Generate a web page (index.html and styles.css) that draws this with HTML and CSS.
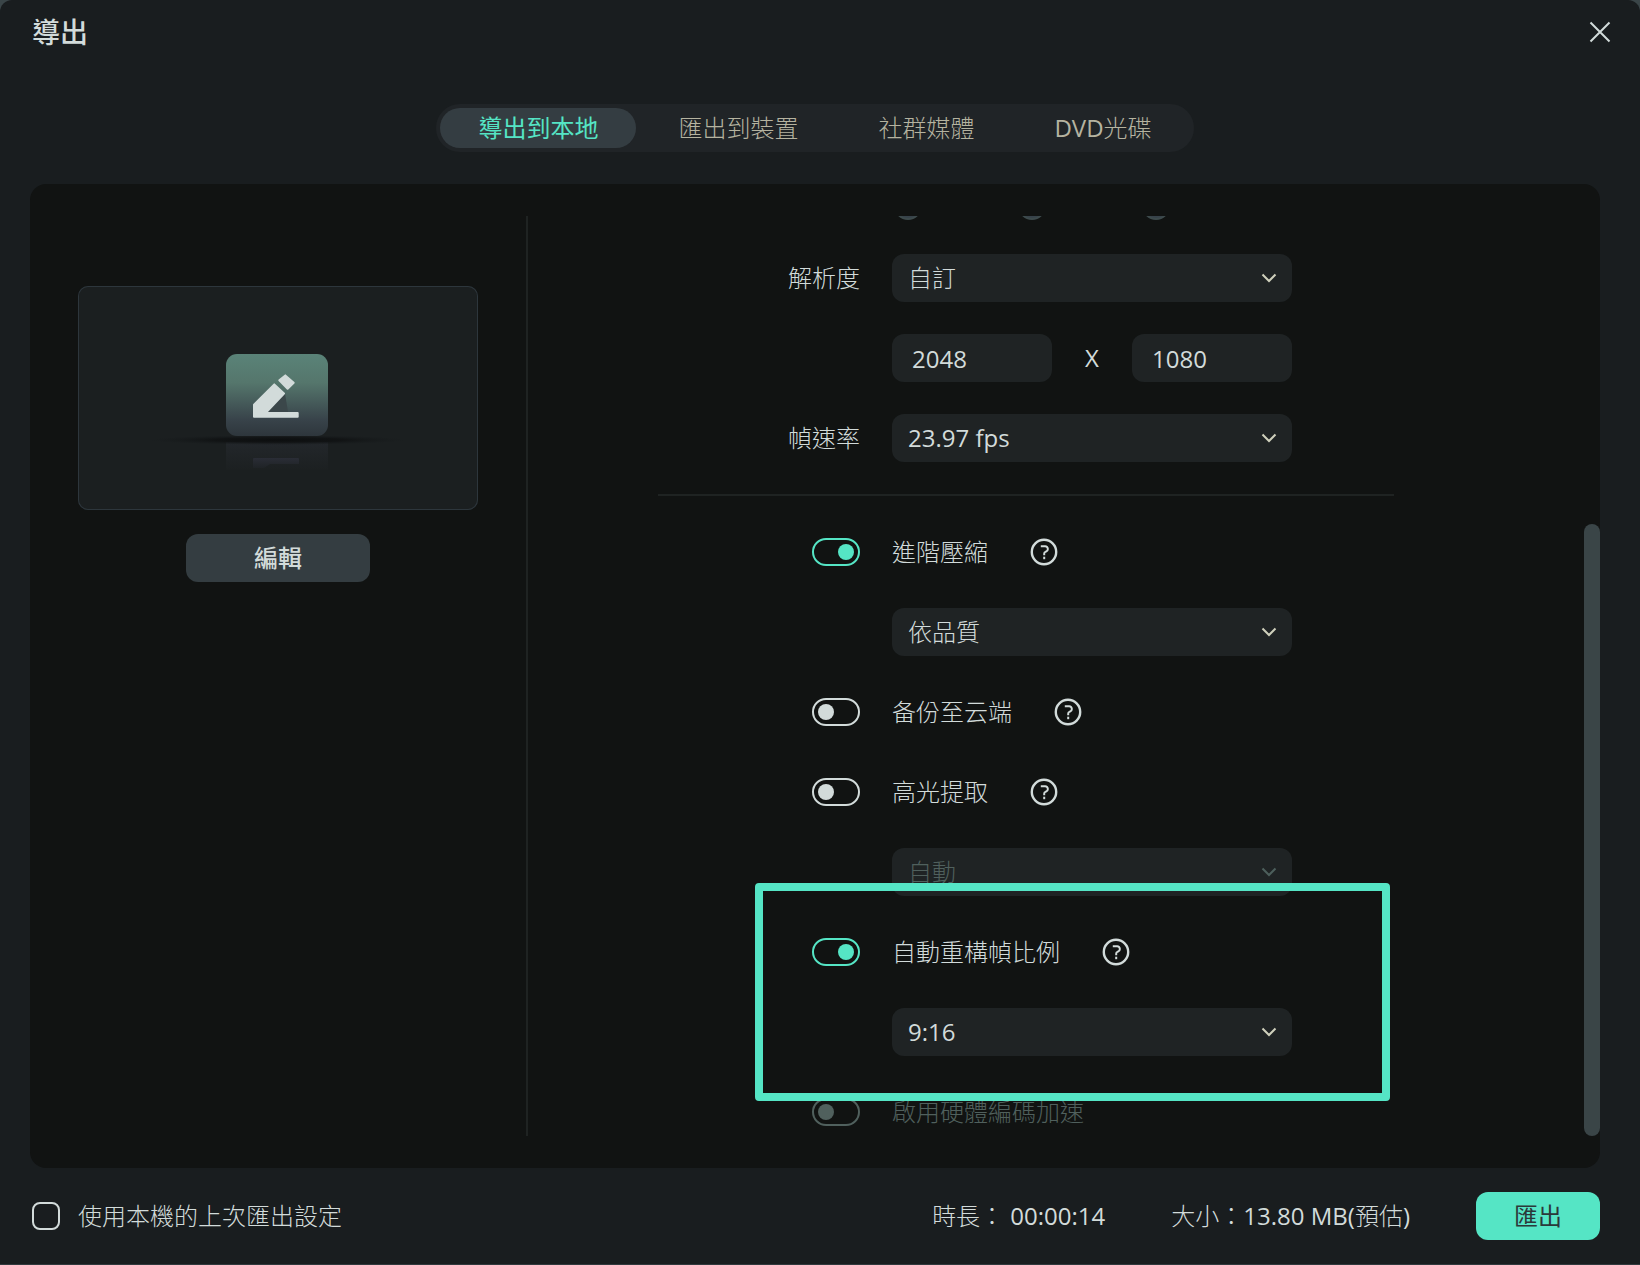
FILE: index.html
```html
<!DOCTYPE html>
<html lang="zh-Hant">
<head>
<meta charset="utf-8">
<meta name="viewport" content="width=device-width, initial-scale=1">
<title>導出</title>
<link rel="stylesheet" href="styles.css">
</head>
<body>
<svg class="symbols" aria-hidden="true">
  <symbol id="chevron" viewBox="0 0 16 10"><path d="M1.5 1.5 8 8l6.500-6.500" fill="none" stroke="currentColor" stroke-width="2"/></symbol>
  <symbol id="help" viewBox="0 0 28 28">
    <circle cx="14" cy="14" r="12.200" fill="none" stroke="currentColor" stroke-width="2.400"/>
    <path d="M10.800 8.200h4.400a2.600 2.600 0 0 1 2.600 2.600v.4a2.400 2.400 0 0 1-1.400 2.200l-1 .500a2 2 0 0 0-1.200 1.800v1.500" fill="none" stroke="currentColor" stroke-width="2"/>
    <path d="M13.200 18.700h2v2.500h-2z" fill="currentColor"/>
  </symbol>
</svg>
<div class="window">
  <header class="titlebar">
    <h1 class="title">導出</h1>
    <button class="close" type="button" aria-label="關閉">
      <svg width="22" height="22" viewBox="0 0 22 22"><path d="M1.500 1.500l19 19M20.500 1.500l-19 19" stroke="currentColor" stroke-width="2"/></svg>
    </button>
  </header>

  <main class="main">
    <nav class="tabs">
      <button class="tab tab-active" type="button">導出到本地</button>
      <button class="tab" type="button">匯出到裝置</button>
      <button class="tab" type="button">社群媒體</button>
      <button class="tab" type="button"><span class="latin">DVD</span>光碟</button>
    </nav>

    <div class="panel">
      <section class="preview">
        <div class="thumb">
          <svg viewBox="0 0 400 224" aria-hidden="true">
            <defs>
              <linearGradient id="tile" x1="0" y1="0" x2="0" y2="1">
                <stop offset="0" stop-color="#5a8378"/>
                <stop offset=".35" stop-color="#55766c"/>
                <stop offset=".8" stop-color="#38434a"/>
                <stop offset="1" stop-color="#2e363c"/>
              </linearGradient>
              <linearGradient id="mirror" x1="0" y1="0" x2="0" y2="1">
                <stop offset="0" stop-color="#23272b"/>
                <stop offset="1" stop-color="#1c2021"/>
              </linearGradient>
              <linearGradient id="mirror-pen" x1="0" y1="0" x2="0" y2="1">
                <stop offset="0" stop-color="#2a2d36"/>
                <stop offset="1" stop-color="#1f2326"/>
              </linearGradient>
              <radialGradient id="shade">
                <stop offset="0" stop-color="#0c0e0f"/>
                <stop offset=".5" stop-color="#0f1112" stop-opacity=".8"/>
                <stop offset="1" stop-color="#15191b" stop-opacity="0"/>
              </radialGradient>
            </defs>
            <rect x="148" y="156" width="102" height="28" fill="url(#mirror)"/>
            <path d="M176 172h44a1 1 0 0 1 1 1v5h-29l-6 4h-11v-9a1 1 0 0 1 1-1z" fill="url(#mirror-pen)"/>
            <ellipse cx="200" cy="154" rx="128" ry="5" fill="url(#shade)"/>
            <rect x="148" y="68" width="102" height="82" rx="11" fill="url(#tile)"/>
            <path d="M190 126l17-18.500 3 18.500z" fill="#3b474a"/>
            <g fill="#d2dbda" stroke="#d2dbda" stroke-width="2" stroke-linejoin="round">
              <path d="M196.300 98.400 206 107.500 187.600 127H219.700V130.700H176V118.700z"/>
              <path d="M207.300 89.400 215.700 96.800 209.600 102.700 201.300 94.300z"/>
            </g>
          </svg>
        </div>
        <button class="edit" type="button">編輯</button>
      </section>

      <div class="viewport">
        <form class="form">
          <div class="row row-radios">
            <span class="caption"></span>
            <div class="radios">
              <input class="radio" type="radio" name="quality" aria-label="較好">
              <input class="radio" type="radio" name="quality" aria-label="推薦">
              <input class="radio" type="radio" name="quality" aria-label="更高">
            </div>
          </div>
          <div class="row">
            <label class="caption" for="resolution">解析度</label>
            <div class="field">
              <select class="select" id="resolution"><option>自訂</option></select>
              <svg class="chevron"><use href="#chevron"/></svg>
            </div>
          </div>
          <div class="row">
            <span class="caption"></span>
            <div class="size">
              <input class="number" type="text" value="2048" aria-label="寬度">
              <span class="latin">X</span>
              <input class="number" type="text" value="1080" aria-label="高度">
            </div>
          </div>
          <div class="row">
            <label class="caption" for="fps">幀速率</label>
            <div class="field">
              <select class="select latin" id="fps"><option>23.97 fps</option></select>
              <svg class="chevron"><use href="#chevron"/></svg>
            </div>
          </div>
          <hr class="rule">
          <div class="row">
            <span class="caption"><input class="switch" type="checkbox" id="compress" checked></span>
            <label for="compress">進階壓縮</label>
            <svg class="help"><use href="#help"/></svg>
          </div>
          <div class="row">
            <span class="caption"></span>
            <div class="field">
              <select class="select" aria-label="壓縮方式"><option>依品質</option></select>
              <svg class="chevron"><use href="#chevron"/></svg>
            </div>
          </div>
          <div class="row">
            <span class="caption"><input class="switch" type="checkbox" id="backup"></span>
            <label for="backup">备份至云端</label>
            <svg class="help"><use href="#help"/></svg>
          </div>
          <div class="row">
            <span class="caption"><input class="switch" type="checkbox" id="highlight"></span>
            <label for="highlight">高光提取</label>
            <svg class="help"><use href="#help"/></svg>
          </div>
          <div class="row row-off">
            <span class="caption"></span>
            <div class="field">
              <select class="select" aria-label="高光時長" disabled><option>自動</option></select>
              <svg class="chevron"><use href="#chevron"/></svg>
            </div>
          </div>
          <div class="reframe">
            <div class="row">
              <span class="caption"><input class="switch" type="checkbox" id="reframe" checked></span>
              <label for="reframe">自動重構幀比例</label>
              <svg class="help"><use href="#help"/></svg>
            </div>
            <div class="row">
              <span class="caption"></span>
              <div class="field">
                <select class="select latin" aria-label="幀比例"><option>9:16</option></select>
                <svg class="chevron"><use href="#chevron"/></svg>
              </div>
            </div>
            <div class="marker"></div>
          </div>
          <div class="row row-off">
            <span class="caption"><input class="switch" type="checkbox" id="hardware" disabled></span>
            <label for="hardware">啟用硬體編碼加速</label>
          </div>
        </form>
      </div>
      <div class="track"><div class="thumb-bar"></div></div>
    </div>
  </main>

  <footer class="footer">
    <div class="remember">
      <input class="check" type="checkbox" id="last">
      <label for="last">使用本機的上次匯出設定</label>
    </div>
    <span>時長： <span class="latin">00:00:14</span></span>
    <span>大小：<span class="latin">13.80 MB(</span>預估<span class="latin">)</span></span>
    <button class="export" type="button">匯出</button>
  </footer>
</div>
</body>
</html>
```
FILE: styles.css
```css
* { box-sizing: border-box; }

body {
  margin: 0;
  background: #3a4548;
  color: #d2dbda;
  font: 300 24px/32px "Open Sans", "Noto Sans CJK TC", sans-serif;
}

button, input, select { font: inherit; color: inherit; margin: 0; }
button { border: 0; padding: 0; cursor: pointer; }

.symbols { display: none; }
.latin { font-weight: 400; }

.window {
  min-height: 100vh;
  display: flex;
  flex-direction: column;
  background: #191d1f;
  border-bottom: 1px solid #30393d;
  border-radius: 12px 12px 0 0;
}

.titlebar {
  height: 64px;
  padding: 0 18px 0 32px;
  display: flex;
  align-items: center;
  justify-content: space-between;
}
.title { margin: 0; font-size: 28px; font-weight: 500; }
.close {
  width: 44px;
  height: 44px;
  display: grid;
  place-items: center;
  background: none;
}

.main {
  flex: 1;
  padding: 40px 40px 0 30px;
  display: flex;
  flex-direction: column;
  align-items: center;
  gap: 32px;
}

.tabs {
  display: flex;
  gap: 4px;
  padding: 4px;
  border-radius: 24px;
  background: #202427;
}
.tab {
  height: 40px;
  padding: 0 38px;
  border-radius: 20px;
  background: none;
  color: #b5b3a0;
}
.tab-active { background: #343d42; color: #55e5c5; font-weight: 400; }

.panel {
  flex: 1;
  align-self: stretch;
  display: flex;
  padding: 32px 0;
  border-radius: 16px;
  background: #111312;
}

.preview {
  width: 498px;
  padding: 70px 48px 0;
  display: flex;
  flex-direction: column;
  align-items: center;
  gap: 24px;
  border-right: 2px solid #1f2322;
}
.thumb {
  width: 400px;
  height: 224px;
  border-radius: 10px;
  background: #1b1f20;
  box-shadow: inset 0 0 0 1px #2d363c;
}
.thumb svg { display: block; }
.edit {
  width: 184px;
  height: 48px;
  border-radius: 12px;
  background: #343d41;
  font-weight: 500;
}

.viewport { flex: 1; overflow: hidden; }
.form {
  margin-top: -26px;
  padding: 0 190px 0 130px;
  display: flex;
  flex-direction: column;
  gap: 32px;
}
.row { height: 48px; display: flex; align-items: center; }
.row-radios { height: 32px; }
.row-off { color: #50605d; }
.caption {
  width: 202px;
  margin-right: 32px;
  display: flex;
  justify-content: flex-end;
}
.rule { width: 100%; height: 2px; margin: 0; border: 0; background: #1f2322; }

.radios { display: flex; gap: 96px; padding-left: 2px; }
.radio {
  appearance: none;
  width: 28px;
  height: 28px;
  border-radius: 50%;
  background: #37424a;
  border: 2px solid #3d4a4c;
}

.field { width: 400px; display: grid; align-items: center; }
.select, .chevron { grid-area: 1 / 1; }
.select {
  appearance: none;
  height: 48px;
  padding: 0 48px 0 16px;
  border: 0;
  border-radius: 12px;
  background: #1f2324;
  opacity: 1;
}
.chevron {
  justify-self: end;
  width: 16px;
  height: 10px;
  margin-right: 15px;
  pointer-events: none;
  color: #cfd0bc;
}
.row-off .chevron { color: #4d5f5c; }

.size { width: 400px; display: flex; align-items: center; justify-content: space-between; }
.number {
  width: 160px;
  height: 48px;
  padding: 0 20px;
  border: 0;
  border-radius: 12px;
  background: #1f2324;
  font-weight: 400;
}

.switch {
  appearance: none;
  width: 48px;
  height: 28px;
  padding: 4px;
  display: flex;
  border: 2px solid currentColor;
  border-radius: 14px;
}
.switch::before {
  content: "";
  width: 16px;
  height: 16px;
  border-radius: 50%;
  background: currentColor;
}
.switch:checked { color: #55e5c5; justify-content: flex-end; }
.help { width: 28px; height: 28px; margin-left: 42px; }

.reframe { position: relative; display: grid; gap: 32px; }
.marker {
  position: absolute;
  inset: -45px 4px -45px 97px;
  border: 8px solid #55e5c5;
  border-radius: 4px;
  pointer-events: none;
}

.track { width: 16px; display: flex; flex-direction: column; justify-content: flex-end; }
.thumb-bar { height: 66.5%; border-radius: 8px; background: #3a4547; }

.footer {
  height: 96px;
  padding: 0 40px 0 32px;
  display: flex;
  align-items: center;
  gap: 66px;
}
.remember { display: flex; align-items: center; gap: 18px; margin-right: auto; }
.check {
  appearance: none;
  width: 28px;
  height: 28px;
  border: 2px solid #d2dbda;
  border-radius: 8px;
}
.export {
  width: 124px;
  height: 48px;
  border-radius: 12px;
  background: #55e5c5;
  color: #2b393a;
  font-weight: 400;
}
```
